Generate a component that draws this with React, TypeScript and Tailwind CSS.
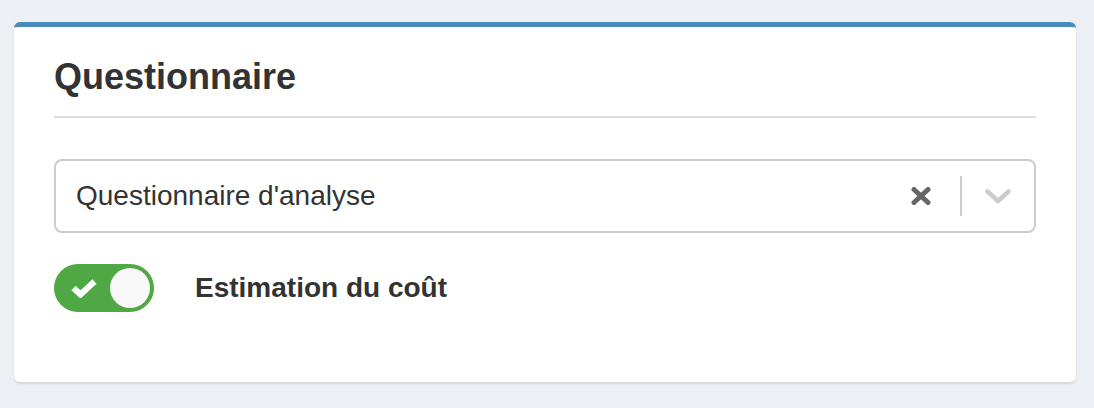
import { useState } from "react";

export default function App() {
  const [enabled, setEnabled] = useState(true);

  return (
    <div
      className="h-[408px] bg-[#ecf0f5] pl-[14px] pr-[18px] pt-[22px] text-[#333]"
      style={{ fontFamily: '"Liberation Sans", Arial, sans-serif' }}
    >
      <div className="h-[360px] rounded-[6px] border-t-[5px] border-[#4b8bbc] bg-white px-[40px] shadow-[0_2px_2px_rgba(0,0,0,0.1)]">
        {/* Header */}
        <div className="border-b-2 border-[#dddddd] pt-[30px] pb-[19px]">
          <h1 className="text-[36px] font-bold leading-[40px] text-[#333]">Questionnaire</h1>
        </div>

        {/* Select */}
        <div className="mt-[41px] flex h-[74px] items-center rounded-[8px] border-2 border-[#cccccc] pl-[20px]">
          <span className="flex-1 text-[28px] leading-none text-[#333]">Questionnaire d'analyse</span>
          <button className="mr-[19px] flex h-[40px] w-[40px] items-center justify-center">
            <svg width="20" height="18" viewBox="0 0 20 18">
              <path d="M3 2.5 L17 15.5 M17 2.5 L3 15.5" stroke="#666" strokeWidth="5" strokeLinecap="round" />
            </svg>
          </button>
          <span className="h-[40px] w-[2px] bg-[#cccccc]" />
          <div className="flex w-[72px] items-center justify-center">
            <svg width="26" height="15" viewBox="0 0 26 15">
              <path d="M2.5 2.5 L13 12 L23.5 2.5" stroke="#cccccc" strokeWidth="4.5" fill="none" strokeLinecap="round" strokeLinejoin="round" />
            </svg>
          </div>
        </div>

        {/* Toggle */}
        <div className="mt-[31px] flex items-center gap-[41px]">
          <button
            onClick={() => setEnabled(!enabled)}
            className={`flex h-[48px] w-[100px] items-center rounded-full px-[4px] ${
              enabled ? "bg-[#4fa843]" : "bg-[#cccccc]"
            }`}
          >
            <span className="flex flex-1 items-center justify-center">
              {enabled && (
                <svg width="28" height="20" viewBox="0 0 28 20">
                  <path d="M3.5 10 L10.5 16.5 L24.5 3.5" stroke="#fff" strokeWidth="6" fill="none" strokeLinejoin="miter" />
                </svg>
              )}
            </span>
            <span className="h-[40px] w-[40px] rounded-full bg-[#f8f8f8]" />
          </button>
          <span className="text-[28px] font-bold leading-none text-[#333]">Estimation du coût</span>
        </div>
      </div>
    </div>
  );
}
